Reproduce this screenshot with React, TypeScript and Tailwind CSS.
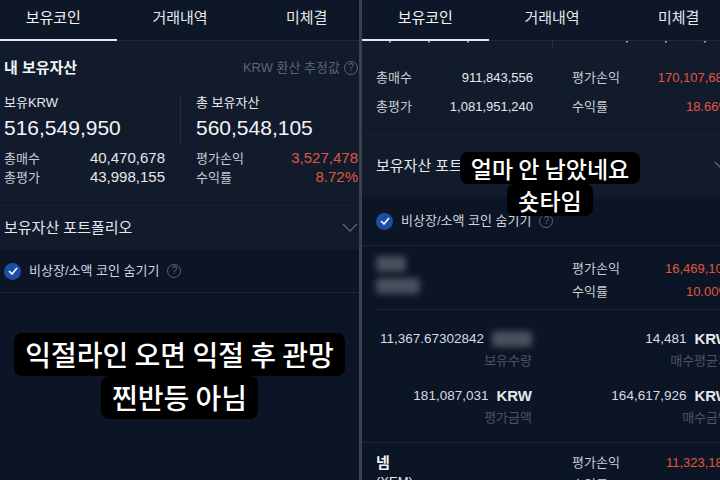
import * as React from "react";

const FONT = "font-['Liberation_Sans','Noto_Sans_CJK_KR',sans-serif]";

function Tabs() {
  const tabs = ["보유코인", "거래내역", "미체결"];
  return (
    <div className="relative z-10 grid h-[41px] grid-cols-3 border-b border-[#1f2a3b] bg-[#0e1727]">
      {tabs.map((t, i) => (
        <div
          key={t}
          className={`relative flex items-center justify-center pb-1 text-[15px] ${
            i === 0 ? "text-[#f3f4f6]" : "text-[#e5e7eb]"
          }`}
        >
          {t}
          {i === 0 && <div className="absolute bottom-[-1px] left-0 right-0 h-[2px] bg-[#e5e7eb]" />}
        </div>
      ))}
    </div>
  );
}

function Chevron() {
  return (
    <svg width="16" height="10" viewBox="0 0 16 10" fill="none">
      <polyline points="1,1 8,8 15,1" stroke="#5b6474" strokeWidth="1.3" />
    </svg>
  );
}

function Help() {
  return (
    <span className="inline-flex h-[14px] w-[14px] items-center justify-center rounded-full border border-[#5b6474] text-[10px] leading-none text-[#5b6474]">
      ?
    </span>
  );
}

function CheckRow({ h }: { h: string }) {
  return (
    <div className={`flex items-center gap-2 border-b border-[#1c2637] px-[14px] ${h}`}>
      <span className="flex h-[17px] w-[17px] items-center justify-center rounded-full bg-[#1d4ea6]">
        <svg width="10" height="8" viewBox="0 0 10 8" fill="none">
          <polyline points="1,4 4,7 9,1" stroke="white" strokeWidth="1.6" />
        </svg>
      </span>
      <span className="text-[13px] text-[#d1d5db]">비상장/소액 코인 숨기기</span>
      <Help />
    </div>
  );
}

function Row({
  label,
  value,
  red,
  h,
  vs = "text-[13px]",
}: {
  label: string;
  value: string;
  red?: boolean;
  h: string;
  vs?: string;
}) {
  return (
    <div className={`flex items-center justify-between text-[13px] ${h}`}>
      <span className="text-[#c9ccd2]">{label}</span>
      <span className={`${vs} ${red ? "text-[#e0573d]" : "text-[#e5e7eb]"}`}>{value}</span>
    </div>
  );
}

function Caption({ lines, size }: { lines: string[]; size: string }) {
  return (
    <div className="flex flex-col items-center">
      {lines.map((l) => (
        <span
          key={l}
          className={`rounded-lg bg-black px-[11px] font-medium text-white ${size} font-['Noto_Sans_CJK_KR',sans-serif]`}
        >
          {l}
        </span>
      ))}
    </div>
  );
}

function LeftPanel() {
  return (
    <div className="relative h-full w-[359px] shrink-0 overflow-hidden bg-[#0c1525]">
      <div className="ml-[-10px] w-[380px]">
        <Tabs />
        <div className="bg-[#121b2c]">
          <div className="flex items-center justify-between px-[14px] pt-[16px] pr-[12px]">
            <span className="text-[15px] font-bold leading-[22px] text-[#f3f4f6]">내 보유자산</span>
            <span className="flex items-center gap-1 text-[13px] text-[#5b6474]">
              KRW 환산 추정값 <Help />
            </span>
          </div>
          <div className="mt-[15px] grid grid-cols-2">
            <div className="pl-[14px] pr-[15px]">
              <div className="text-[13px] leading-[18px] text-[#e5e7eb]">보유KRW</div>
              <div className="mt-[3px] text-[21px] leading-[26px] text-[#f3f4f6]">516,549,950</div>
              <div className="mt-[8px]">
                <Row label="총매수" value="40,470,678" h="h-[19px]" vs="text-[15px]" />
                <Row label="총평가" value="43,998,155" h="h-[19px]" vs="text-[15px]" />
              </div>
            </div>
            <div className="pr-[12px]">
              <div className="border-l border-[#222c3c] pl-[15px] pb-[2px]">
                <div className="text-[13px] leading-[18px] text-[#e5e7eb]">총 보유자산</div>
                <div className="mt-[3px] text-[21px] leading-[26px] text-[#f3f4f6]">560,548,105</div>
              </div>
              <div className="mt-[6px] pl-[16px]">
                <Row label="평가손익" value="3,527,478" red h="h-[19px]" vs="text-[15px]" />
                <Row label="수익률" value="8.72%" red h="h-[19px]" vs="text-[15px]" />
              </div>
            </div>
          </div>
          <div className="mt-[18px] flex h-[45px] items-center justify-between border-t border-[#172133] pl-[14px] pr-[12px]">
            <span className="text-[15px] text-[#e5e7eb]">보유자산 포트폴리오</span>
            <Chevron />
          </div>
        </div>
        <CheckRow h="h-[43px]" />
      </div>
      <div className="absolute left-0 right-0 top-[333px]">
        <Caption lines={["익절라인 오면 익절 후 관망", "찐반등 아님"]} size="text-[28px] leading-[43px]" />
      </div>
    </div>
  );
}

function Blur({ w, h }: { w: string; h: string }) {
  return <span className={`inline-block rounded-sm bg-[#48505e] blur-[3px] ${w} ${h}`} />;
}

function RightPanel() {
  return (
    <div className="relative h-full flex-1 overflow-hidden bg-[#0c1525]">
      <div className="w-[380px]">
        <Tabs />
        <div className="bg-[#121b2c]">
          <div className="grid h-[8px] grid-cols-2 overflow-hidden">
            <div className="mt-[-21px] pl-[14px] text-[20px] leading-[26px] text-[#e5e7eb]">2,347,562,319</div>
            <div className="mt-[-21px] border-l border-[#222c3c] pl-[60px] text-[20px] leading-[26px] text-[#e5e7eb]">1,315,880,536</div>
          </div>
          <div className="mt-[14px] grid grid-cols-2">
            <div className="pl-[14px] pr-[19px]">
              <Row label="총매수" value="911,843,556" h="h-[29px]" />
              <Row label="총평가" value="1,081,951,240" h="h-[29px]" />
            </div>
            <div className="pl-[20px] pr-[12px]">
              <Row label="평가손익" value="170,107,684" red h="h-[29px]" />
              <Row label="수익률" value="18.66%" red h="h-[29px]" />
            </div>
          </div>
          <div className="mt-[13px] flex h-[63px] items-center justify-between border-t border-[#172133] pl-[14px] pr-[12px]">
            <span className="text-[15px] text-[#e5e7eb]">보유자산 포트폴리오</span>
            <Chevron />
          </div>
        </div>
        <CheckRow h="h-[49px]" />
        <div className="ml-[14px] flex h-[64px] justify-between border-b border-[#1c2637] pr-[12px]">
          <div className="flex flex-col gap-[6px] pt-[10px]">
            <Blur w="w-[30px]" h="h-[16px]" />
            <Blur w="w-[44px]" h="h-[16px]" />
          </div>
          <div className="w-[158px] pt-[11px]">
            <Row label="평가손익" value="16,469,103" red h="h-[23px]" />
            <Row label="수익률" value="10.00%" red h="h-[23px]" />
          </div>
        </div>
        <div className="grid grid-cols-2 border-b border-[#1c2637] pb-[15px] pr-[12px]">
          {[
            { v: "11,367.67302842", unit: "blur", sub: "보유수량" },
            { v: "14,481", unit: "KRW", sub: "매수평균가" },
            { v: "181,087,031", unit: "KRW", sub: "평가금액" },
            { v: "164,617,926", unit: "KRW", sub: "매수금액" },
          ].map((c, i) => (
            <div
              key={c.sub}
              className={`flex flex-col items-end ${i % 2 === 0 ? "pr-[14px]" : ""} ${i < 2 ? "pt-[19px]" : "pt-[16px]"}`}
            >
              <div className="flex h-[20px] items-center gap-[8px]">
                <span className="text-[13.5px] text-[#d8dbe0]">{c.v}</span>
                {c.unit === "blur" ? (
                  <Blur w="w-[40px]" h="h-[16px]" />
                ) : (
                  <span className="text-[15px] font-bold text-[#e5e7eb]">{c.unit}</span>
                )}
              </div>
              <span className="mt-[3px] text-[13px] leading-[18px] text-[#4a5363]">{c.sub}</span>
            </div>
          ))}
        </div>
        <div className="flex justify-between pl-[14px] pr-[12px] pt-[9px]">
          <div className="flex flex-col pt-[1px]">
            <span className="text-[15px] font-bold leading-[20px] text-[#f3f4f6]">넴</span>
            <span className="text-[13px] leading-[18px] text-[#e5e7eb]">(XEM)</span>
          </div>
          <div className="w-[158px]">
            <Row label="평가손익" value="11,323,183" red h="h-[22px]" />
            <Row label="수익률" value="6.79%" red h="h-[22px]" />
          </div>
        </div>
      </div>
      <div className="absolute left-[88px] top-[152px] w-[200px]">
        <Caption lines={["얼마 안 남았네요", "숏타임"]} size="text-[23px] leading-[32px]" />
      </div>
    </div>
  );
}

export default function App() {
  return (
    <div className={`flex h-[480px] w-[720px] overflow-hidden bg-[#0c1525] ${FONT}`}>
      <LeftPanel />
      <div className="w-[3px] shrink-0 bg-[#3b414b]" />
      <RightPanel />
    </div>
  );
}
